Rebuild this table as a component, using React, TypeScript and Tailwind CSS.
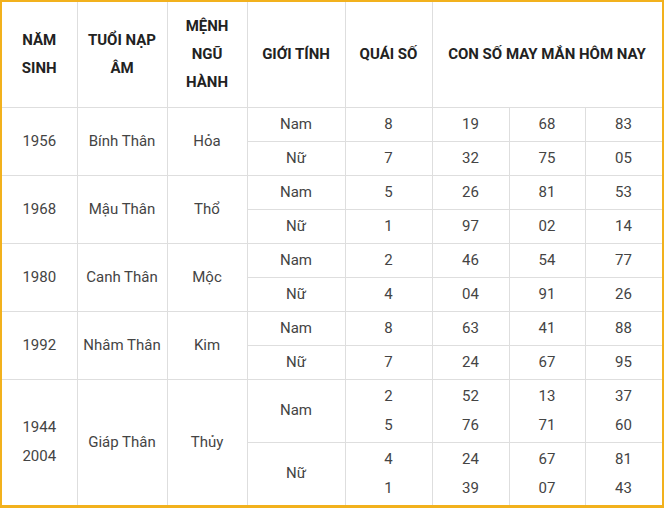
import React from 'react';

type Row = {
  years: string[];
  tuoi: string;
  menh: string;
  nam: { q: string[]; n: string[][] };
  nu: { q: string[]; n: string[][] };
};

const ROWS: Row[] = [
  { years: ['1956'], tuoi: 'Bính Thân', menh: 'Hỏa', nam: { q: ['8'], n: [['19', '68', '83']] }, nu: { q: ['7'], n: [['32', '75', '05']] } },
  { years: ['1968'], tuoi: 'Mậu Thân', menh: 'Thổ', nam: { q: ['5'], n: [['26', '81', '53']] }, nu: { q: ['1'], n: [['97', '02', '14']] } },
  { years: ['1980'], tuoi: 'Canh Thân', menh: 'Mộc', nam: { q: ['2'], n: [['46', '54', '77']] }, nu: { q: ['4'], n: [['04', '91', '26']] } },
  { years: ['1992'], tuoi: 'Nhâm Thân', menh: 'Kim', nam: { q: ['8'], n: [['63', '41', '88']] }, nu: { q: ['7'], n: [['24', '67', '95']] } },
  {
    years: ['1944', '2004'],
    tuoi: 'Giáp Thân',
    menh: 'Thủy',
    nam: { q: ['2', '5'], n: [['52', '13', '37'], ['76', '71', '60']] },
    nu: { q: ['4', '1'], n: [['24', '67', '81'], ['39', '07', '43']] },
  },
];

const td = 'border border-[#dedede] px-1 py-0 text-center align-middle';
const th = 'border border-[#dedede] px-1 py-0 text-center align-middle font-bold text-[#222] leading-[28px]';

function Lines({ items }: { items: string[] }) {
  return (
    <>
      {items.map((t, i) => (
        <div key={i} className="leading-[29px]">{t}</div>
      ))}
    </>
  );
}

export default function App() {
  return (
    <div className="w-[664px] h-[508px] bg-white border-2 border-b-[3px] border-[#f2b11d] overflow-hidden">
      <table
        className="w-[660px] table-fixed border-collapse text-[15px] text-[#444]"
        style={{ fontFamily: 'Roboto, "Noto Sans", sans-serif' }}
      >
        <colgroup>
          <col className="w-[75px]" />
          <col className="w-[90px]" />
          <col className="w-[80px]" />
          <col className="w-[98px]" />
          <col className="w-[87px]" />
          <col className="w-[77px]" />
          <col className="w-[76px]" />
          <col className="w-[77px]" />
        </colgroup>
        <thead>
          <tr className="h-[105px]">
            <th className={th + ' border-t-0 border-l-0'}>NĂM<br />SINH</th>
            <th className={th + ' border-t-0'}>TUỔI NẠP<br />ÂM</th>
            <th className={th + ' border-t-0'}>MỆNH<br />NGŨ<br />HÀNH</th>
            <th className={th + ' border-t-0'}>GIỚI TÍNH</th>
            <th className={th + ' border-t-0'}>QUÁI SỐ</th>
            <th colSpan={3} className={th + ' border-t-0 whitespace-nowrap'}>CON SỐ MAY MẮN HÔM NAY</th>
          </tr>
        </thead>
        <tbody>
          {ROWS.map((r, i) => {
            const big = r.years.length > 1;
            const h = big ? 'h-[63px]' : 'h-[34px]';
            return (
              <React.Fragment key={i}>
                <tr className={h}>
                  <td rowSpan={2} className={td + ' border-l-0'}><Lines items={r.years} /></td>
                  <td rowSpan={2} className={td}>{r.tuoi}</td>
                  <td rowSpan={2} className={td}>{r.menh}</td>
                  <td className={td}>Nam</td>
                  <td className={td}><Lines items={r.nam.q} /></td>
                  {[0, 1, 2].map((c) => (
                    <td key={c} className={td}><Lines items={r.nam.n.map((x) => x[c])} /></td>
                  ))}
                </tr>
                <tr className={h}>
                  <td className={td}>Nữ</td>
                  <td className={td}><Lines items={r.nu.q} /></td>
                  {[0, 1, 2].map((c) => (
                    <td key={c} className={td}><Lines items={r.nu.n.map((x) => x[c])} /></td>
                  ))}
                </tr>
              </React.Fragment>
            );
          })}
        </tbody>
      </table>
    </div>
  );
}
